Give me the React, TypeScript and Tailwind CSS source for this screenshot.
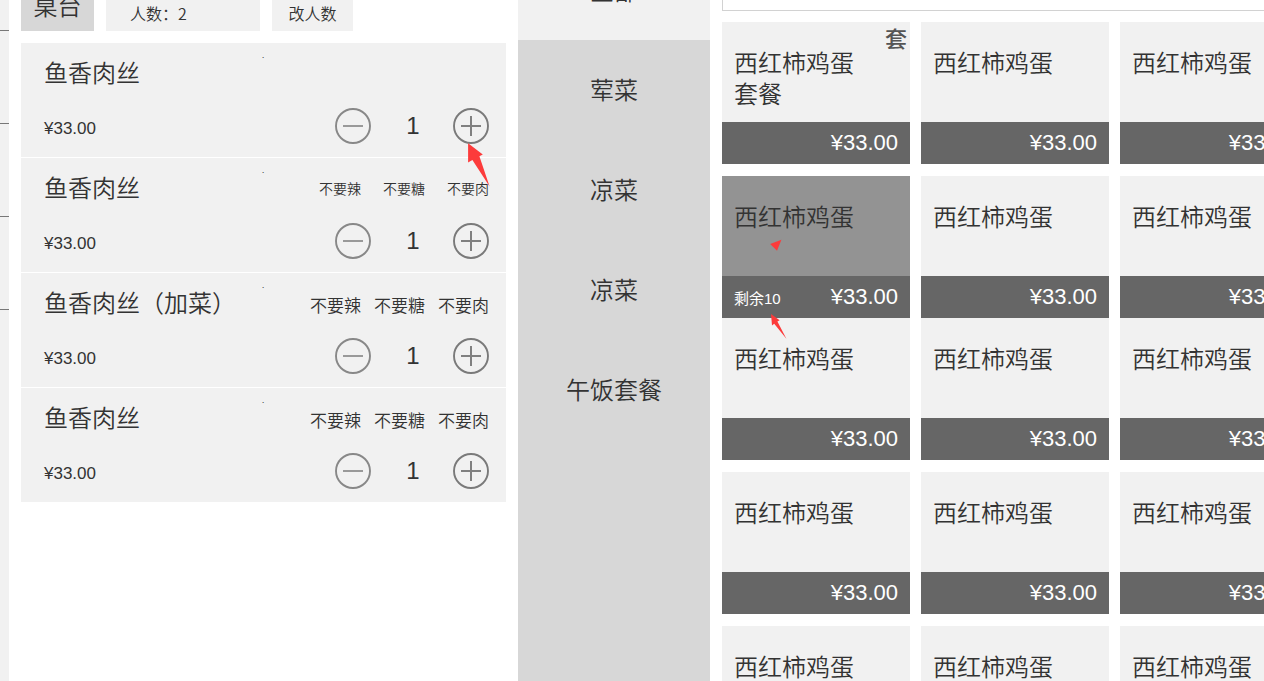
import React from "react";

const cjk = "font-['Noto_Sans_CJK_SC',sans-serif]";
const latin = "font-['Liberation_Sans','Noto_Sans_CJK_SC',sans-serif]";

type Order = { name: string; tags: string[]; small?: boolean; pointed?: boolean };
type Dish = { name: string; badge?: string; left?: number; soldOut?: boolean };

const tags = ["不要辣", "不要糖", "不要肉"];

const orders: Order[] = [
  { name: "鱼香肉丝", tags: [], pointed: true },
  { name: "鱼香肉丝", tags, small: true },
  { name: "鱼香肉丝（加菜）", tags },
  { name: "鱼香肉丝", tags },
];

const categories = ["全部", "荤菜", "凉菜", "凉菜", "午饭套餐"];

const plain: Dish = { name: "西红柿鸡蛋" };
const groups: Dish[][] = [
  [{ name: "西红柿鸡蛋套餐", badge: "套" }, plain, plain],
  [{ name: "西红柿鸡蛋", left: 10, soldOut: true }, plain, plain, plain, plain, plain],
  [plain, plain, plain],
  [plain, plain, plain],
];

function StepButton({ kind }: { kind: "minus" | "plus" }) {
  const plus = kind === "plus";
  return (
    <button type="button" aria-label={plus ? "增加" : "减少"} className="block size-9">
      <svg viewBox="0 0 36 36" className="size-9" fill="none">
        <circle cx="18" cy="18" r="17" stroke={plus ? "#7a7a7a" : "#888"} strokeWidth="1.9" />
        <path d={plus ? "M8 18H28M18 8V28" : "M8 18H28"} stroke={plus ? "#808080" : "#999"} strokeWidth="2" />
      </svg>
    </button>
  );
}

function OrderRow({ order }: { order: Order }) {
  return (
    <li className="h-[114px] bg-[#f1f1f1] pl-[23px] pr-[17px]">
      <div className="flex h-[60px] items-center">
        <h3 className="w-[218px] shrink-0 whitespace-nowrap pb-[2px] text-2xl font-[350]">{order.name}</h3>
        <span className="self-start pt-[7px] text-[8px] leading-[9px]">.</span>
        <ul
          className={
            order.small
              ? "ml-auto flex gap-[22px] text-sm font-[350]"
              : "ml-auto flex gap-[13px] pt-1 text-[17px] font-[350] leading-6"
          }
        >
          {order.tags.map((tag) => (
            <li key={tag}>{tag}</li>
          ))}
        </ul>
      </div>
      <div className="mt-[5px] flex h-9 items-center justify-between">
        <span className={`${latin} pt-[6px] text-[17px]`}>¥33.00</span>
        <div className="flex items-center">
          <StepButton kind="minus" />
          <span className={`${latin} w-[82px] pl-[2px] text-center text-2xl`}>1</span>
          <div className="relative">
            <StepButton kind="plus" />
            {order.pointed && (
              <svg viewBox="0 0 22 44" className="pointer-events-none absolute left-[15px] top-[35px] z-10 h-11 w-[22px]">
                <polygon points="0.1,0.2 14.8,11.4 11.4,13.2 21.6,43.4 4.4,17 0.1,19.4" fill="#fc3b3b" />
              </svg>
            )}
          </div>
        </div>
      </div>
    </li>
  );
}

function DishCard({ dish }: { dish: Dish }) {
  return (
    <button
      type="button"
      className={
        dish.soldOut
          ? "relative block h-[142px] text-left bg-[#939393]"
          : "relative block h-[142px] text-left bg-[#f1f1f1]"
      }
    >
      <span className="flex h-full flex-col justify-between">
        <span className="w-[144px] pl-3 pt-6 text-2xl font-[350] leading-[31px]">{dish.name}</span>
        <span className={`${latin} flex h-[42px] items-center bg-[#666] px-3 pb-px text-white`}>
          {dish.left !== undefined && <span className="pt-[6px] text-[15px]">剩余{dish.left}</span>}
          <span className="ml-auto text-[22px]">¥33.00</span>
        </span>
      </span>
      {dish.badge && (
        <span className="absolute right-[3px] top-[3px] text-[22px] font-medium leading-6 text-[#555]">{dish.badge}</span>
      )}
      {dish.soldOut && (
        <>
          <svg viewBox="0 0 12 12" className="absolute left-12 top-[63px] size-3">
            <polygon points="0.2,5 11.4,0.8 7,11.8" fill="#fc3b3b" />
          </svg>
          <svg viewBox="0 0 16 26" className="absolute left-[49px] top-[138px] z-10 h-[26px] w-4">
            <polygon points="0,0 8.6,6.2 6.4,7.6 15.4,24.8 3.2,9.8 1,11.6" fill="#fc3b3b" />
          </svg>
        </>
      )}
    </button>
  );
}

export default function App() {
  return (
    <div className={`${cjk} flex h-screen gap-3 overflow-hidden bg-white text-[#333]`}>
      <aside className="w-[9px] shrink-0 bg-[#f1f1f1]">
        <div className="-mt-[62px]">
          {[0, 1, 2, 3].map((n) => (
            <div key={n} className="h-[93px] border-b border-[#777]" />
          ))}
        </div>
      </aside>

      <section className="w-[485px] shrink-0">
        <header className="flex h-[31px] items-end gap-3 overflow-hidden">
          <button type="button" className="h-[73px] w-[73px] shrink-0 bg-[#d7d7d7] pt-5 text-2xl font-[350]">
            桌台
          </button>
          <div className="flex h-[73px] w-[154px] shrink-0 items-end bg-[#f1f1f1] px-6 pb-[6px] text-base font-[350]">
            人数：2
          </div>
          <button type="button" className="flex h-[73px] w-[81px] shrink-0 items-end justify-center bg-[#f1f1f1] pb-[6px] text-base font-[350]">
            改人数
          </button>
        </header>
        <ul className="mt-3 flex flex-col gap-px">
          {orders.map((order, i) => (
            <OrderRow key={i} order={order} />
          ))}
        </ul>
      </section>

      <nav className="w-48 shrink-0 bg-[#d7d7d7]">
        <div className="-mt-[60px] flex flex-col">
          {categories.map((name, i) => (
            <button
              key={i}
              type="button"
              className={
                i === 0
                  ? "h-[100px] bg-[#f1f1f1] text-2xl font-[350]"
                  : "h-[100px] pb-[3px] text-2xl font-[350]"
              }
            >
              {name}
            </button>
          ))}
        </div>
      </nav>

      <main className="min-w-0 flex-1 overflow-hidden">
        <div className="w-max">
          <div className="flex h-[11px] items-end overflow-hidden">
            <input type="search" aria-label="搜索" className="h-[60px] w-full shrink-0 border border-[#d2d2d2] bg-white px-3" />
          </div>
          <div className="mt-[11px] flex flex-col gap-3">
            {groups.map((group, i) => (
              <div key={i} className="grid grid-cols-[repeat(3,188px)] gap-x-[11px]">
                {group.map((dish, j) => (
                  <DishCard key={j} dish={dish} />
                ))}
              </div>
            ))}
          </div>
        </div>
      </main>
    </div>
  );
}
